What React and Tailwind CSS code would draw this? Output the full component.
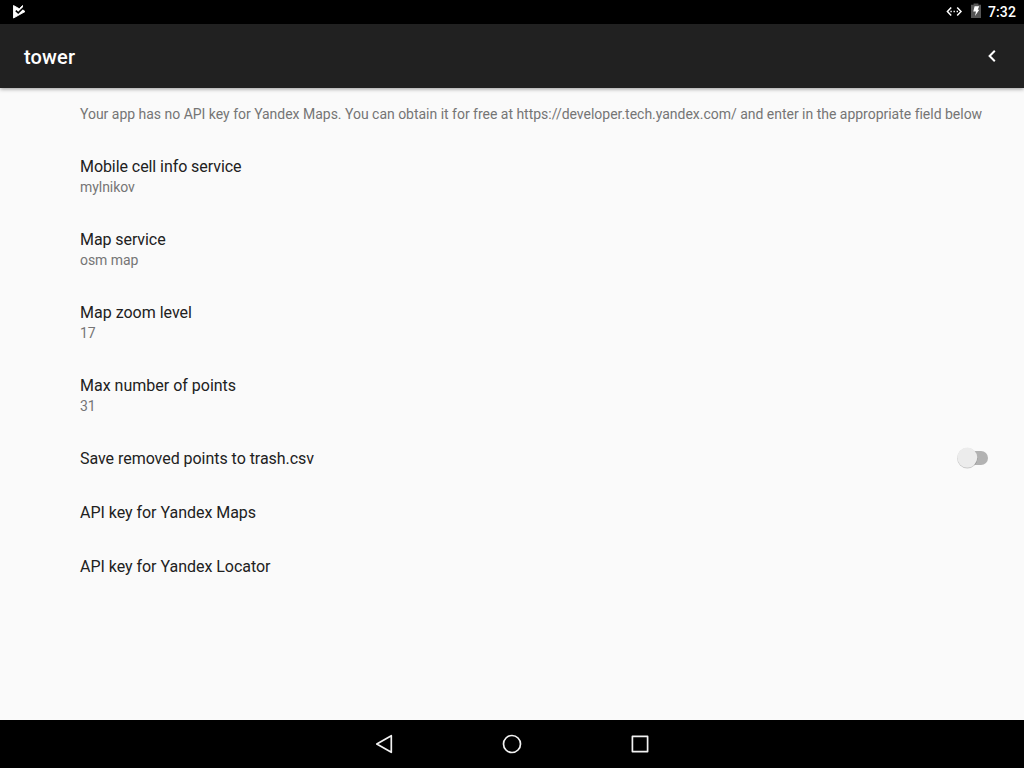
function Row({ title, value, tracking = "tracking-normal", children }) {
  return (
    <div className={value ? "flex h-[73px] flex-col pt-[17px]" : "flex h-[54px] items-start justify-between pt-[17px]"}>
      <div className={`text-[16px] leading-[21px] text-[#212121] ${tracking}`}>{title}</div>
      {value && <div className="text-[14px] leading-[21px] tracking-[-0.05px] text-[#757575]">{value}</div>}
      {children}
    </div>
  );
}

export default function App() {
  return (
    <div className="flex h-[768px] w-[1024px] flex-col overflow-hidden bg-[#fafafa] font-['Roboto',sans-serif]">
      <div className="flex h-6 shrink-0 items-center bg-black text-white">
        <svg width="32" height="24" viewBox="0 0 32 24">
          <path d="M13.5 5.5 L19.3 8.8 L22.5 5.5 L22.5 9.5 L25 11.6 L13.5 18 Z" fill="#fff" stroke="#fff" strokeWidth="0.9" strokeLinejoin="round" />
          <path d="M15.8 10.6 L18.2 12.9 L23.4 7.7" fill="none" stroke="#000" strokeWidth="1.6" />
        </svg>
        <div className="grow" />
        <svg width="40" height="24" viewBox="944 0 40 24">
          <path d="M951.2 7.4 L947.4 11.5 L951.2 15.6 M957.2 7.4 L961 11.5 L957.2 15.6" fill="none" stroke="#fff" strokeWidth="1.5" />
          <path d="M950.4 10.8h1.4v1.4h-1.4z M953.5 10.8h1.4v1.4h-1.4z M956.6 10.8h1.4v1.4h-1.4z" fill="#fff" />
          <path d="M971 4.7h2.6v-1.3h4.8v1.3h2.6v13.3h-10z" fill="#555" />
          <path d="M974.6 6.2h4.6l-1.5 3.6h1.6l-4.3 6.3 1-4.6h-2.7z" fill="#fff" />
        </svg>
        <div className="w-10 pl-1 text-[14px] leading-6 font-medium tracking-[0.1px]">7:32</div>
      </div>
      <div className="z-10 flex h-16 shrink-0 items-center justify-between bg-[#212121] pr-6 pl-6 text-white shadow-[0_1px_4px_rgba(0,0,0,0.4)]">
        <div className="pt-[2px] text-[20px] leading-7 font-medium tracking-[0.15px]">tower</div>
        <svg width="16" height="16" viewBox="0 0 16 16"><path d="M10.8 2.8 L5.6 8 L10.8 13.2" fill="none" stroke="#fff" strokeWidth="2" /></svg>
      </div>
      <div className="flex grow flex-col pr-9 pl-20">
        <div className="h-[51px] pt-4 text-[14px] leading-5 tracking-[-0.017px] whitespace-nowrap text-[#757575]">
          Your app has no API key for Yandex Maps. You can obtain it for free at https://developer.tech.yandex.com/ and enter in the appropriate field below
        </div>
        <Row title="Mobile cell info service" value="mylnikov" tracking="tracking-[-0.07px]" />
        <Row title="Map service" value="osm map" tracking="tracking-[-0.08px]" />
        <Row title="Map zoom level" value="17" />
        <Row title="Max number of points" value="31" />
        <Row title="Save removed points to trash.csv" tracking="tracking-[-0.04px]">
          <svg width="34" height="26" viewBox="956 446 34 26" className="-mt-0.5 -mr-0.5">
            <rect x="959" y="451" width="29" height="14" rx="7" fill="#b2b2b2" />
            <circle cx="967.3" cy="458.3" r="10.2" fill="#000" fillOpacity="0.2" />
            <circle cx="967.3" cy="457.6" r="10" fill="#ececec" />
          </svg>
        </Row>
        <Row title="API key for Yandex Maps" tracking="tracking-[-0.03px]" />
        <Row title="API key for Yandex Locator" tracking="tracking-[-0.03px]" />
      </div>
      <div className="flex h-12 shrink-0 justify-center bg-black">
        <svg width="300" height="48" viewBox="362 720 300 48" fill="none" stroke="#f2f2f2" strokeWidth="1.7" strokeLinejoin="round">
          <path d="M391.3 735.7 L376.8 744 L391.3 752.3 Z" />
          <circle cx="512" cy="744" r="8.5" />
          <rect x="632.4" y="736.4" width="15.2" height="15.2" />
        </svg>
      </div>
    </div>
  );
}
